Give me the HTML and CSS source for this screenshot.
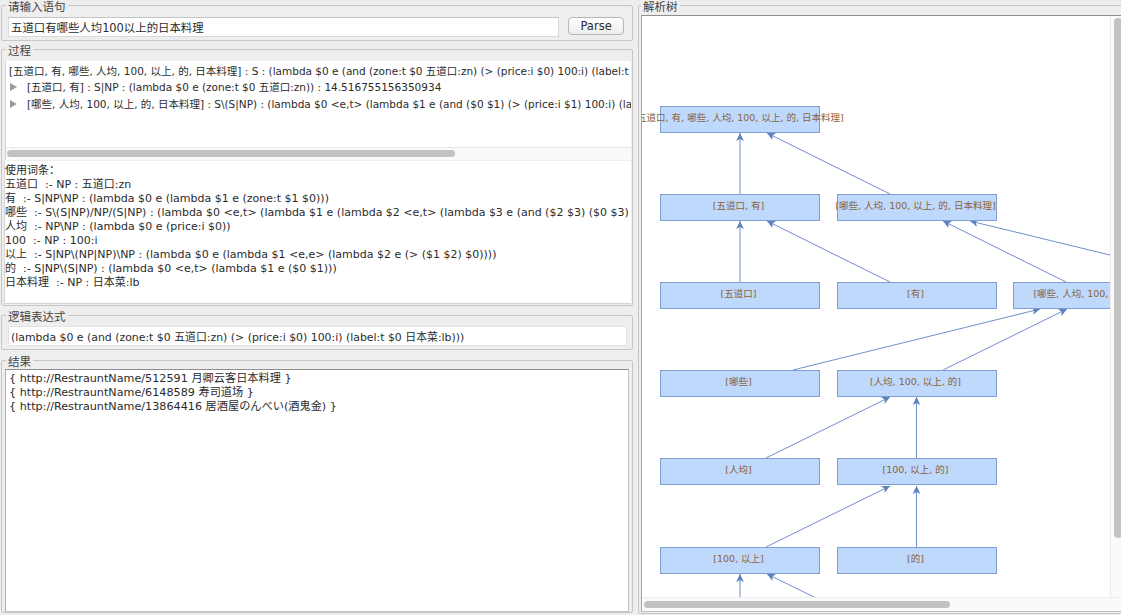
FILE: index.html
```html
<!DOCTYPE html>
<html lang="zh">
<head>
  <meta charset="UTF-8" />
  <title>解析树</title>
  <link rel="stylesheet" href="styles.css">
</head>
<body>
  <div class="left">
    <section class="group group-input">
      <span class="title">请输入语句</span>
      <div class="input-row">
        <input class="sentence" type="text" value="五道口有哪些人均100以上的日本料理" />
        <button class="parse">Parse</button>
      </div>
    </section>

    <section class="group group-process">
      <span class="title">过程</span>
      <div class="tree-list">
        <div class="tree-row">[五道口, 有, 哪些, 人均, 100, 以上, 的, 日本料理] : S : (lambda $0 e (and (zone:t $0 五道口:zn) (&gt; (price:i $0) 100:i) (label:t $0 日本菜:lb)))</div>
        <div class="tree-row child"><i class="arrow"></i>[五道口, 有] : S|NP : (lambda $0 e (zone:t $0 五道口:zn)) : 14.516755156350934</div>
        <div class="tree-row child"><i class="arrow"></i>[哪些, 人均, 100, 以上, 的, 日本料理] : S\(S|NP) : (lambda $0 &lt;e,t&gt; (lambda $1 e (and ($0 $1) (&gt; (price:i $1) 100:i) (label:t $1 日本菜:lb))))</div>
        <div class="hbar"><div class="thumb"></div></div>
      </div>
      <div class="lexicon">
        <div>使用词条：</div>
        <div>五道口  :- NP : 五道口:zn</div>
        <div>有  :- S|NP\NP : (lambda $0 e (lambda $1 e (zone:t $1 $0)))</div>
        <div>哪些  :- S\(S|NP)/NP/(S|NP) : (lambda $0 &lt;e,t&gt; (lambda $1 e (lambda $2 &lt;e,t&gt; (lambda $3 e (and ($2 $3) ($0 $3) (&gt; $1 $3))))))</div>
        <div>人均  :- NP\NP : (lambda $0 e (price:i $0))</div>
        <div>100  :- NP : 100:i</div>
        <div>以上  :- S|NP\(NP|NP)\NP : (lambda $0 e (lambda $1 &lt;e,e&gt; (lambda $2 e (&gt; ($1 $2) $0))))</div>
        <div>的  :- S|NP\(S|NP) : (lambda $0 &lt;e,t&gt; (lambda $1 e ($0 $1)))</div>
        <div>日本料理  :- NP : 日本菜:lb</div>
      </div>
    </section>

    <section class="group group-logic">
      <span class="title">逻辑表达式</span>
      <input class="logic" type="text" value="(lambda $0 e (and (zone:t $0 五道口:zn) (> (price:i $0) 100:i) (label:t $0 日本菜:lb)))" />
    </section>

    <section class="group group-result">
      <span class="title">结果</span>
      <div class="results">
        <div>{ http://RestrauntName/512591 月卿云客日本料理 }</div>
        <div>{ http://RestrauntName/6148589 寿司道场 }</div>
        <div>{ http://RestrauntName/13864416 居酒屋のんべい(酒鬼金) }</div>
      </div>
    </section>
  </div>

  <div class="right">
    <section class="group group-tree">
      <span class="title">解析树</span>
      <div class="viewer">
        <div class="canvas">
          <svg class="edges" width="468" height="581" viewBox="642 16 468 581">
            <defs>
              <marker id="head" markerUnits="userSpaceOnUse" markerWidth="9" markerHeight="9" refX="8" refY="4.5" orient="auto">
                <path d="M8 4.5 L0 0.6 L2 4.5 L0 8.4 Z" fill="#5f82bf" />
              </marker>
            </defs>
            <line x1="740" y1="194" x2="740" y2="133" />
            <line x1="890" y1="194" x2="767" y2="133" />
            <line x1="740" y1="282" x2="740" y2="221" />
            <line x1="890" y1="282" x2="767" y2="221" />
            <line x1="1066" y1="282" x2="943" y2="221" />
            <line x1="1110" y1="255" x2="970" y2="221" />
            <line x1="793" y1="370" x2="1040" y2="309" />
            <line x1="943" y1="370" x2="1067" y2="309" />
            <line x1="766" y1="458" x2="890" y2="397" />
            <line x1="916.5" y1="458" x2="916.5" y2="397" />
            <line x1="766" y1="547" x2="890" y2="486" />
            <line x1="916.5" y1="547" x2="916.5" y2="486" />
            <line x1="740" y1="597" x2="740" y2="574" />
            <line x1="814" y1="597" x2="767" y2="574" />
          </svg>
          <div class="node col1 row1">[五道口, 有, 哪些, 人均, 100, 以上, 的, 日本料理]</div>
          <div class="node col1 row2">[五道口, 有]</div>
          <div class="node col2 row2">[哪些, 人均, 100, 以上, 的, 日本料理]</div>
          <div class="node col1 row3">[五道口]</div>
          <div class="node col2 row3">[有]</div>
          <div class="node col3 row3">[哪些, 人均, 100, 以上, 的]</div>
          <div class="node col1 row4">[哪些]</div>
          <div class="node col2 row4">[人均, 100, 以上, 的]</div>
          <div class="node col1 row5">[人均]</div>
          <div class="node col2 row5">[100, 以上, 的]</div>
          <div class="node col1 row6">[100, 以上]</div>
          <div class="node col2 row6">[的]</div>
        </div>
        <div class="vbar"><div class="vthumb"></div></div>
        <div class="hbar2"><div class="thumb2"></div></div>
      </div>
    </section>
  </div>
</body>
</html>
```

FILE: styles.css
```css
* { box-sizing: border-box; }
html, body { height: 100%; }
body {
  margin: 0;
  width: 1121px;
  height: 615px;
  overflow: hidden;
  display: flex;
  background: #eeeeee;
  color: #2b2b2b;
  font-family: "DejaVu Sans", "Noto Sans CJK SC", sans-serif;
  font-size: 11px;
}

.left { width: 638px; padding: 5px 0 0 1px; flex: none; }
.right { flex: 1; min-width: 0; padding-top: 5px; }

.group {
  position: relative;
  display: flex;
  flex-direction: column;
  border: 1px solid #c6c6c6;
  border-radius: 2px;
  width: 632px;
}
.title {
  align-self: flex-start;
  margin: -6px 0 0 4px;
  padding: 0 2px;
  height: 14px;
  line-height: 14px;
  font-size: 11.5px;
  background: #eeeeee;
  color: #444;
}

/* input */
.group-input { height: 36px; }
.input-row { display: flex; padding: 3px 8px 0 6px; gap: 9px; }
.sentence {
  width: 553px;
  height: 20px;
  padding: 0 2px;
  border: 1px solid #dadada;
  border-top-color: #c4c4c4;
  font: inherit;
  font-size: 11.4px;
  color: #2b2b2b;
  background: #fff;
  outline: none;
}
.parse {
  width: 56px;
  height: 18px;
  padding: 0;
  border: 1px solid #b4b4b4;
  border-radius: 4px;
  background: linear-gradient(#ffffff, #ededed);
  font: inherit;
  font-size: 11.5px;
  color: #2b2b2b;
}

/* process */
.group-process { margin-top: 8px; height: 257px; padding: 0 1px 0 2px; }
.group-process .title { margin-left: 2px; }
.tree-list {
  position: relative;
  margin: 3px 0 0 1px;
  height: 99px;
  width: 626px;
  background: #fff;
  padding-top: 1.5px;
  overflow: hidden;
  border-left: 1px solid #d4d4d4;
  font-size: 10.5px;
}
.tree-row { padding-left: 3px; height: 16.5px; line-height: 16.5px; white-space: nowrap; }
.tree-row.child { padding-left: 21px; position: relative; }
.arrow {
  position: absolute;
  left: 4px;
  top: 4px;
  border-left: 7px solid #9a9a9a;
  border-top: 4px solid transparent;
  border-bottom: 4px solid transparent;
}
.hbar {
  position: absolute;
  left: 0;
  right: 0;
  bottom: 0;
  height: 13px;
  background: #fafafa;
  border-top: 1px solid #e6e6e6;
  padding: 2px 0 0 1px;
}
.thumb { width: 448px; height: 7px; border-radius: 4px; background: #c2c2c2; }
.lexicon {
  margin-top: 1px;
  height: 143px;
  padding: 2.5px 0 0 0;
  background: #fff;
  border: 1px solid #d4d4d4;
  border-width: 0 0 1px 1px;
  line-height: 14.1px;
  overflow: hidden;
}
.lexicon div { white-space: pre; }

/* logic */
.group-logic { margin-top: 9px; height: 35px; }
.logic {
  margin: 2px 0 0 6px;
  width: 619px;
  height: 20px;
  padding: 0 2px;
  border: 1px solid #e2e2e2;
  font: inherit;
  font-size: 10.9px;
  color: #2b2b2b;
  background: #fff;
  outline: none;
}

/* result */
.group-result { margin-top: 10px; height: 253px; }
.results {
  margin: 0 0 0 3px;
  width: 624px;
  height: 243px;
  padding: 2px 0 0 3px;
  background: #fff;
  border: 1px solid #a9a9a9;
  border-color: #8e8e8e #c4c4c4 #c4c4c4 #b0b0b0;
  font-size: 11.2px;
  line-height: 14px;
  white-space: nowrap;
  overflow: hidden;
}

/* parse tree */
.group-tree { width: 490px; height: 609px; }
.group-tree .title { margin-left: 2px; }
.viewer {
  position: relative;
  margin: 1px 0 0 2px;
  width: 487px;
  height: 597px;
  background: #fff;
  border: 1px solid #9c9c9c;
  border-color: #8e8e8e #bdbdbd #bdbdbd #a6a6a6;
  border-right: 0;
  overflow: hidden;
}
.canvas { position: relative; width: 468px; height: 581px; overflow: hidden; }
.edges { position: absolute; left: 0; top: 0; }
.edges line { stroke: #6f90c9; stroke-width: 1; marker-end: url(#head); }
.node {
  position: absolute;
  width: 160px;
  height: 27px;
  line-height: 21px;
  padding-right: 3px;
  white-space: nowrap;
  display: flex;
  justify-content: center;
  background: #bfd9fc;
  border: 1px solid #7f9ed2;
  color: #8a6238;
  font-size: 9.5px;
}
.col1 { left: 18px; }
.col2 { left: 195px; }
.col3 { left: 371px; }
.row1 { top: 90px; }
.row2 { top: 178px; }
.row3 { top: 266px; }
.row4 { top: 354px; }
.row5 { top: 442px; }
.row6 { top: 531px; }

.vbar {
  position: absolute;
  left: 468px;
  top: 0;
  width: 19px;
  height: 582px;
  background: #fafafa;
  border-left: 1px solid #ececec;
}
.vthumb { margin: 2px 0 0 3px; width: 8px; height: 520px; border-radius: 4px; background: #c2c2c2; }
.hbar2 {
  position: absolute;
  left: 0;
  top: 581px;
  width: 487px;
  height: 15px;
  background: #fafafa;
  border-top: 1px solid #ececec;
  padding: 3px 0 0 2px;
}
.thumb2 { width: 306px; height: 7px; border-radius: 4px; background: #c2c2c2; }
```
